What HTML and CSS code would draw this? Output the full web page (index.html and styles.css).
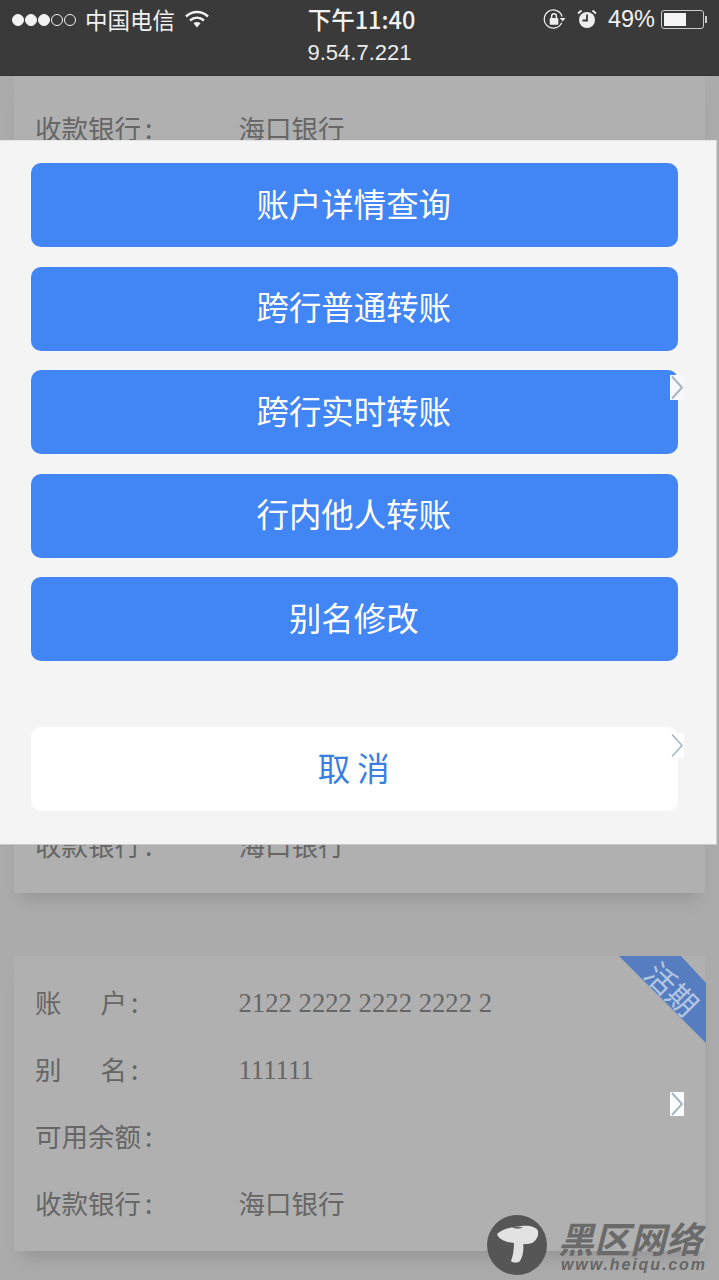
FILE: index.html
```html
<!DOCTYPE html>
<html lang="zh-CN">
<head>
<meta charset="utf-8">
<title>账户</title>
<link rel="stylesheet" href="styles.css">
</head>
<body>
<div class="screen">
  <header class="status">
    <div class="status-row">
      <div class="status-left">
        <span class="dots"><i class="dot on"></i><i class="dot on"></i><i class="dot on"></i><i class="dot"></i><i class="dot"></i></span>
        <span class="carrier">中国电信</span>
        <svg class="wifi" viewBox="0 0 24 18"><path d="M1 6.500C7.500.5 16.500.5 23 6.500" fill="none" stroke="#f2f2f2" stroke-width="2.400"/><path d="M5 10.500c4.300-3.800 9.700-3.800 14 0" fill="none" stroke="#f2f2f2" stroke-width="2.400"/><path d="M8.500 13.300c2.200-1.800 4.800-1.800 7 0L12 17.500z" fill="#f2f2f2"/></svg>
      </div>
      <div class="time">下午11:40</div>
      <div class="status-right">
        <svg class="lock" viewBox="0 0 24 24"><path d="M19.500 15.500A9.500 9.500 0 1 1 20 9" fill="none" stroke="#eee" stroke-width="1.300"/><path d="M17.500 10.500h6l-3 3.500z" fill="#eee"/><rect x="7" y="10.500" width="9" height="7" rx="1" fill="#eee"/><path d="M9 11V8.500a2.500 2.500 0 0 1 5 0V11" fill="none" stroke="#eee" stroke-width="1.500"/></svg>
        <svg class="alarm" viewBox="0 0 20 20"><circle cx="10" cy="11" r="8" fill="#eee"/><path d="M10 5.500V11.500H5.500" fill="none" stroke="#3a3a3a" stroke-width="1.800"/><path d="M1 4.500 4.500 1.500M19 4.500 15.500 1.500" stroke="#eee" stroke-width="1.800"/></svg>
        <span class="pct">49%</span>
        <span class="battery"><span class="battery-fill"></span></span>
      </div>
    </div>
    <div class="ip">9.54.7.221</div>
  </header>

  <main class="list">
    <section class="card card-cut">
      <div class="row"><span class="label">收款银行<span class="colon">:</span></span><span class="value">海口银行</span></div>
    </section>
    <section class="card">
      <div class="row"><span class="label"><span class="wide">账户</span><span class="colon">:</span></span><span class="value num">2122 2222 2222 2222 2</span></div>
      <div class="row"><span class="label"><span class="wide">别名</span><span class="colon">:</span></span><span class="value num">111111</span></div>
      <div class="row"><span class="label">可用余额<span class="colon">:</span></span><span class="value"></span></div>
      <div class="row"><span class="label">收款银行<span class="colon">:</span></span><span class="value">海口银行</span></div>
    </section>
    <section class="card">
      <div class="row"><span class="label"><span class="wide">账户</span><span class="colon">:</span></span><span class="value num">2122 2222 2222 2222 2</span></div>
      <div class="row"><span class="label"><span class="wide">别名</span><span class="colon">:</span></span><span class="value num">111111</span></div>
      <div class="row"><span class="label">可用余额<span class="colon">:</span></span><span class="value"></span></div>
      <div class="row"><span class="label">收款银行<span class="colon">:</span></span><span class="value">海口银行</span></div>
    </section>
    <section class="card">
      <span class="ribbon"><span class="ribbon-text">活期</span></span>
      <div class="row"><span class="label"><span class="wide">账户</span><span class="colon">:</span></span><span class="value num">2122 2222 2222 2222 2</span></div>
      <div class="row"><span class="label"><span class="wide">别名</span><span class="colon">:</span></span><span class="value num">111111</span></div>
      <div class="row"><span class="label">可用余额<span class="colon">:</span></span><span class="value"></span></div>
      <div class="row"><span class="label">收款银行<span class="colon">:</span></span><span class="value">海口银行</span></div>
      <svg class="chev chev-card" viewBox="0 0 14 24"><path d="M2 1 12 12 2 23" fill="none" stroke="#a9b6c2" stroke-width="2"/></svg>
    </section>
  </main>

  <div class="sheet">
    <button class="btn">账户详情查询</button>
    <button class="btn">跨行普通转账</button>
    <button class="btn">跨行实时转账<svg class="chev chev-btn" viewBox="0 0 14 24"><path d="M2 1 12 12 2 23" fill="none" stroke="#a9b6c2" stroke-width="2"/></svg></button>
    <button class="btn">行内他人转账</button>
    <button class="btn">别名修改</button>
    <button class="btn btn-cancel">取 消<svg class="chev chev-cancel" viewBox="0 0 14 24"><path d="M2 1 12 12 2 23" fill="none" stroke="#a9b6c2" stroke-width="1.600"/></svg></button>
  </div>

  <div class="mark">
    <svg class="mark-logo" viewBox="0 0 60 60"><circle cx="30" cy="30" r="30" fill="#565656"/><path d="M10 19C15 14 24 12 34 11c8-1 16 1 17 5 1 5-2 10-6 12-6 2-13 1-18 0C19 27 12 25 10 19z" fill="#e2e2e2"/><path d="M25 12.500c3-1 8-1 11 0-3 1.500-8 1.500-11 0z" fill="#666"/><path d="M27 28h9c1 6 0 13-3 18-2 2-7 2-9 0 2-5 3-12 3-18z" fill="#e2e2e2"/></svg>
    <div class="mark-text">
      <div class="mark-cn">黑区网络</div>
      <div class="mark-en">www.heiqu.com</div>
    </div>
  </div>
</div>
</body>
</html>
```
FILE: styles.css
```css
* { box-sizing: border-box; }
html, body { margin: 0; padding: 0; }
body { font-family: "Noto Sans CJK SC", "Liberation Sans", sans-serif; background: #ababab; }

.screen { position: relative; width: 719px; height: 1280px; overflow: hidden; background: #ababab; }

.status { height: 76px; background: #3a3a3a; color: #f2f2f2; border-bottom: 1px solid #333; }
.status-row { display: grid; grid-template-columns: 1fr auto 1fr; align-items: center; height: 38px; padding: 0 13px 0 12px; }
.status-left { display: flex; align-items: center; }
.dots { display: flex; gap: 1px; width: 73px; padding-top: 1px; }
.dot { width: 12px; height: 12px; border-radius: 50%; border: 1px solid #f2f2f2; }
.dot.on { background: #f2f2f2; }
.carrier { font-size: 22.500px; line-height: 26px; width: 100px; }
.wifi { width: 24px; height: 18px; }
.time { font: 500 23.500px/30px "Noto Sans CJK SC", sans-serif; padding-left: 5px; }
.status-right { display: flex; align-items: center; justify-content: flex-end; }
.lock { width: 23px; height: 23px; margin-right: 11px; margin-left: -1px; }
.alarm { width: 20px; height: 20px; margin-right: 11px; }
.pct { font: 23.500px/28px "Liberation Sans", sans-serif; margin-right: 6px; }
.battery { position: relative; display: block; width: 43px; height: 19px; padding: 2px; border: 1px solid #ccc; border-radius: 3px; margin-right: 2px; }
.battery::after { content: ""; position: absolute; right: -4px; top: 5px; width: 2px; height: 7px; background: #ccc; }
.battery-fill { display: block; width: 22px; height: 13px; background: #f5f5f5; }
.ip { text-align: center; font: 22px/26px "Liberation Sans", sans-serif; color: #ececec; margin-top: 2px; }

.list { display: flex; flex-direction: column; gap: 63px; padding: 0 14px; }
.card { position: relative; flex: none; height: 295px; padding: 11.500px 0 0 21px; background: #b0b0b0; box-shadow: 0 14px 16px -8px rgba(0,0,0,.13); }
.card-cut { height: 101px; padding-top: 17.500px; }
.row { display: flex; align-items: center; height: 67px; font-size: 26.500px; color: #666; }
.label { display: flex; width: 203.500px; flex: none; }
.colon { margin-left: 4px; }
.wide { display: block; width: 92px; text-align: justify; text-align-last: justify; }
.value { white-space: pre; }
.num { font-family: "Liberation Serif", serif; font-size: 26.700px; padding-top: 4px; }

.ribbon { position: absolute; top: 0; right: -1px; width: 87px; height: 87px; background: #557dc0; clip-path: polygon(0 0, 62px 0, 87px 27px, 87px 87px); }
.ribbon-text { position: absolute; left: 19px; top: 12px; width: 70px; text-align: center; font-size: 30px; line-height: 40px; color: #b4c6e2; transform: rotate(45deg); }

.sheet { position: absolute; left: 0; top: 140px; width: 717px; height: 705px; display: flex; flex-direction: column; gap: 19.500px; padding: 22px 38px 0 31px; background: #f4f4f4; border-top: 1px solid #e6e6e6; border-right: 1px solid #d6d6d6; border-bottom: 1px solid #c8c8c8; }
.btn { position: relative; flex: none; height: 84px; border: 0; padding: 0 1.500px 4px 0; border-radius: 10px; background: #4285f4; color: #fff; font: 400 32.400px/1 "Noto Sans CJK SC", sans-serif; text-align: center; }
.btn-cancel { margin-top: 46.500px; background: #fff; color: #3a7fde; }
.chev { position: absolute; display: block; }
.chev-btn { right: -6px; top: 5px; width: 14px; height: 25px; background: #f6f8fb; }
.chev-cancel { right: -6px; top: 6px; width: 14px; height: 25px; background: #fff; }
.chev-card { right: 21px; top: 136px; width: 14px; height: 24px; background: #fafcfd; }

.mark { position: absolute; left: 487px; top: 1215px; display: flex; gap: 11px; }
.mark-logo { width: 60px; height: 60px; }
.mark-cn { font-size: 36px; line-height: 36px; margin-top: 4px; font-weight: 700; font-style: italic; color: #6a6a6a; white-space: nowrap; }
.mark-en { font: italic 700 16px/17px "Liberation Sans", sans-serif; color: #666; letter-spacing: 1.900px; padding-left: 3px; margin-top: 1px; white-space: nowrap; }
```
